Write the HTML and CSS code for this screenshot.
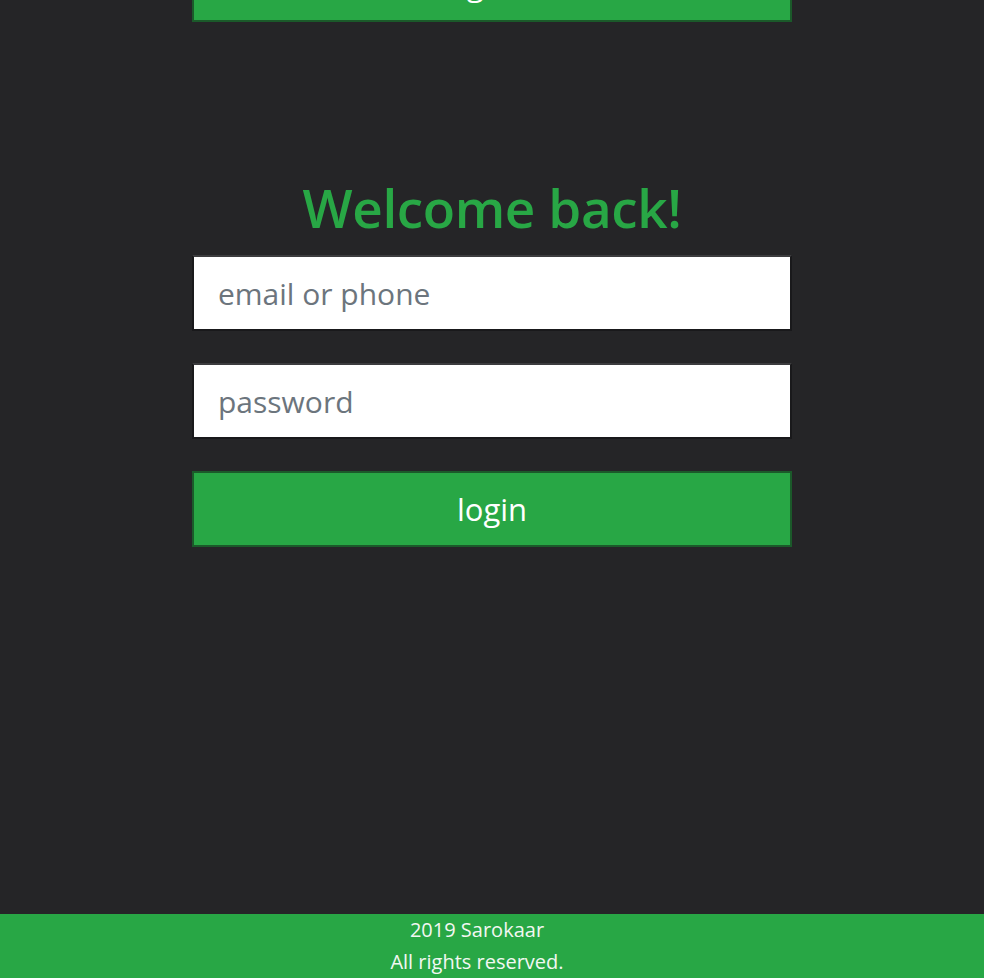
FILE: index.html
```html
<!DOCTYPE html>
<html lang="en">
<head>
<meta charset="utf-8">
<title>Sarokaar - Login</title>
<link rel="stylesheet" href="styles.css">
</head>
<body>
<main class="page">
  <div class="wrap">
    <button class="btn btn-top" type="button">register</button>
    <h1 class="title">Welcome back!</h1>
    <form class="form">
      <input class="field" type="text" placeholder="email or phone">
      <input class="field" type="password" placeholder="password">
      <button class="btn" type="submit">login</button>
    </form>
  </div>
</main>
<footer class="footer">
  <div>2019 Sarokaar</div>
  <div>All rights reserved.</div>
</footer>
</body>
</html>
```

FILE: styles.css
```css
html, body {
  margin: 0;
  padding: 0;
}
body {
  background: #252527;
  font-family: "Open Sans", "Noto Sans", sans-serif;
  height: 100vh;
  display: flex;
  flex-direction: column;
  overflow: hidden;
}
.page {
  flex: 1;
  margin-top: -54px;
}
.wrap {
  width: 600px;
  margin: 0 auto;
  display: flex;
  flex-direction: column;
}
.btn {
  box-sizing: border-box;
  height: 76px;
  width: 100%;
  background: #28a745;
  border: 2px solid #1b5a2a;
  color: #ffffff;
  font-family: "Open Sans", "Noto Sans", sans-serif;
  font-size: 31px;
  padding: 0;
  margin: 0;
}
.btn-top {
  margin-bottom: 154px;
}
.title {
  margin: 0 0 15px;
  text-align: center;
  color: #28a745;
  font-size: 53px;
  font-weight: 600;
  line-height: 1.2;
  letter-spacing: -0.4px;
}
.form {
  display: flex;
  flex-direction: column;
  gap: 32px;
}
.field {
  box-sizing: border-box;
  height: 76px;
  width: 100%;
  margin: 0;
  border: 2px solid #19191b;
  border-top-color: #3c3c3e;
  background: #ffffff;
  padding: 2px 24px 0;
  font-family: "Open Sans", "Noto Sans", sans-serif;
  font-size: 30px;
  color: #333;
  outline: none;
}
.field::placeholder {
  color: #6c757d;
}
.footer {
  height: 64px;
  background: #28a745;
  color: #f2f7f2;
  text-align: center;
  font-size: 20px;
  line-height: 32px;
  padding-right: 30px;
}
```
